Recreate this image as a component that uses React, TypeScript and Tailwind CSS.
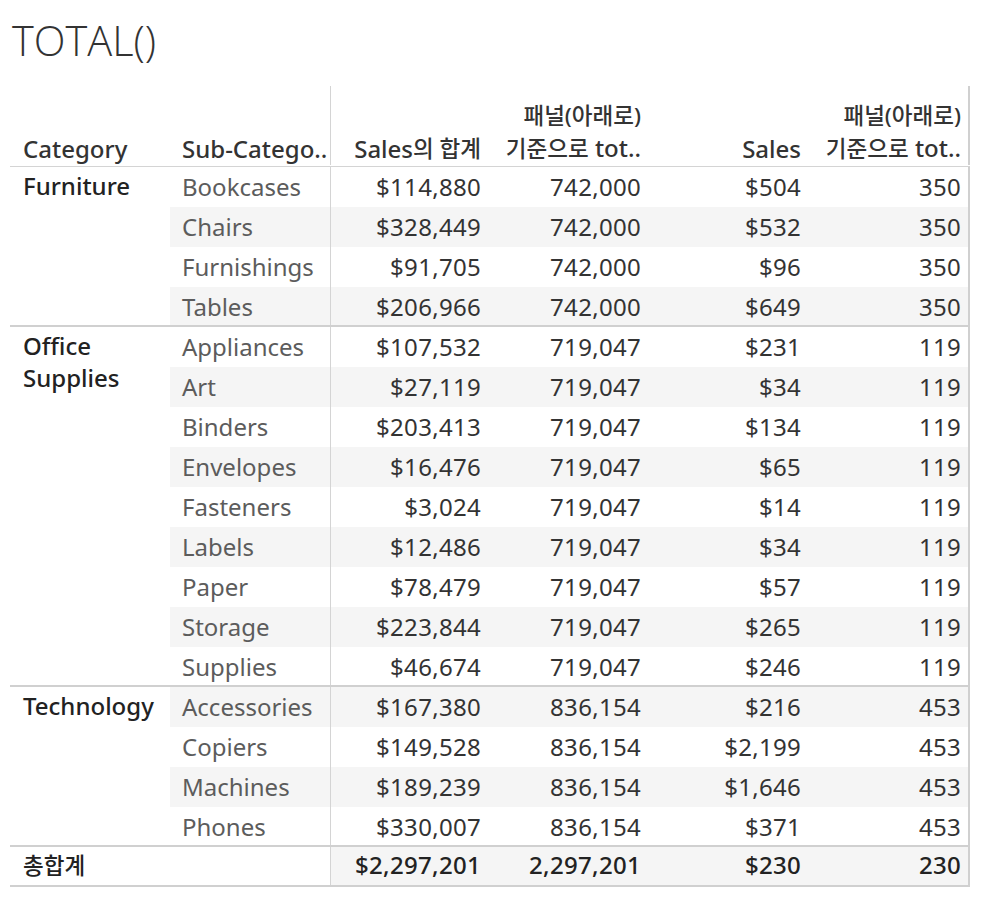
import React from "react";

type Row = { sub: string; sales: string; panel: string; avg: string; panelAvg: string };
type Group = { category: string[]; rows: Row[] };

const groups: Group[] = [
  {
    category: ["Furniture"],
    rows: [
      { sub: "Bookcases", sales: "$114,880", panel: "742,000", avg: "$504", panelAvg: "350" },
      { sub: "Chairs", sales: "$328,449", panel: "742,000", avg: "$532", panelAvg: "350" },
      { sub: "Furnishings", sales: "$91,705", panel: "742,000", avg: "$96", panelAvg: "350" },
      { sub: "Tables", sales: "$206,966", panel: "742,000", avg: "$649", panelAvg: "350" },
    ],
  },
  {
    category: ["Office", "Supplies"],
    rows: [
      { sub: "Appliances", sales: "$107,532", panel: "719,047", avg: "$231", panelAvg: "119" },
      { sub: "Art", sales: "$27,119", panel: "719,047", avg: "$34", panelAvg: "119" },
      { sub: "Binders", sales: "$203,413", panel: "719,047", avg: "$134", panelAvg: "119" },
      { sub: "Envelopes", sales: "$16,476", panel: "719,047", avg: "$65", panelAvg: "119" },
      { sub: "Fasteners", sales: "$3,024", panel: "719,047", avg: "$14", panelAvg: "119" },
      { sub: "Labels", sales: "$12,486", panel: "719,047", avg: "$34", panelAvg: "119" },
      { sub: "Paper", sales: "$78,479", panel: "719,047", avg: "$57", panelAvg: "119" },
      { sub: "Storage", sales: "$223,844", panel: "719,047", avg: "$265", panelAvg: "119" },
      { sub: "Supplies", sales: "$46,674", panel: "719,047", avg: "$246", panelAvg: "119" },
    ],
  },
  {
    category: ["Technology"],
    rows: [
      { sub: "Accessories", sales: "$167,380", panel: "836,154", avg: "$216", panelAvg: "453" },
      { sub: "Copiers", sales: "$149,528", panel: "836,154", avg: "$2,199", panelAvg: "453" },
      { sub: "Machines", sales: "$189,239", panel: "836,154", avg: "$1,646", panelAvg: "453" },
      { sub: "Phones", sales: "$330,007", panel: "836,154", avg: "$371", panelAvg: "453" },
    ],
  },
];

const ko = "text-[22.5px]";
const num = "text-right tracking-[0.3px]";

export default function App() {
  let index = 0;

  return (
    <div className="min-h-screen bg-white pl-[10px] text-[24px] text-[#333] font-['Noto_Sans','Noto_Sans_CJK_KR',sans-serif]">
      <h1 className="mt-[20px] h-[40px] pl-[2px] text-[41.5px] leading-[40px] font-light text-[#333] font-['Open_Sans',sans-serif]">
        TOTAL()
      </h1>

      <div className="mt-[26px] w-[960px]">
        {/* header */}
        <div className="flex h-[81px] border-b border-[#d4d4d4] pb-[1px] leading-[32px] font-medium text-[#333]">
          <div className="flex w-[160px] items-end pl-[13px]">Category</div>
          <div className="flex w-[160px] items-end pl-[12px]">Sub-Catego..</div>
          <div className="flex w-[160px] items-end justify-end border-l border-[#d4d4d4] pr-[9px]">
            Sales<span className={ko}>의 합계</span>
          </div>
          <div className="flex w-[160px] flex-col items-end justify-end pr-[9px]">
            <span className={ko}>패널(아래로)</span>
            <span>
              <span className={ko}>기준으로</span> tot..
            </span>
          </div>
          <div className="flex w-[160px] items-end justify-end pr-[9px]">Sales</div>
          <div className="flex w-[160px] flex-col items-end justify-end border-r-2 border-[#d0d0d0] pr-[7px]">
            <span className={ko}>패널(아래로)</span>
            <span>
              <span className={ko}>기준으로</span> tot..
            </span>
          </div>
        </div>

        {groups.map((g) => (
          <div key={g.category.join(" ")} className="flex border-b-2 border-[#d0d0d0]">
            <div className="w-[160px] pl-[13px] pt-[3px] leading-[32px] font-medium text-[#222]">
              {g.category.map((c) => (
                <div key={c}>{c}</div>
              ))}
            </div>
            <div className="flex-1">
              {g.rows.map((r, i) => {
                const band = index++ % 2 === 1;
                const last = i === g.rows.length - 1;
                return (
                  <div
                    key={r.sub}
                    className={`flex leading-[40px] ${last ? "h-[38px]" : "h-[40px]"} ${band ? "bg-[#f5f5f5]" : "bg-white"}`}
                  >
                    <div className="w-[160px] pl-[12px] text-[#5c5c5c]">{r.sub}</div>
                    <div className={`w-[160px] border-l border-[#d4d4d4] pr-[9px] ${num}`}>{r.sales}</div>
                    <div className={`w-[160px] pr-[9px] ${num}`}>{r.panel}</div>
                    <div className={`w-[160px] pr-[9px] ${num}`}>{r.avg}</div>
                    <div className={`w-[160px] border-r-2 border-[#d0d0d0] pr-[7px] ${num}`}>{r.panelAvg}</div>
                  </div>
                );
              })}
            </div>
          </div>
        ))}

        {/* grand total */}
        <div className="flex h-[40px] border-b-2 border-[#d0d0d0] leading-[36px] font-medium text-[#222]">
          <div className="w-[320px] pl-[13px]">
            <span className={ko}>총합계</span>
          </div>
          <div className="flex flex-1 bg-[#f5f5f5]">
            <div className={`w-[160px] border-l border-[#d4d4d4] pr-[9px] ${num}`}>$2,297,201</div>
            <div className={`w-[160px] pr-[9px] ${num}`}>2,297,201</div>
            <div className={`w-[160px] pr-[9px] ${num}`}>$230</div>
            <div className={`w-[160px] border-r-2 border-[#d0d0d0] pr-[7px] ${num}`}>230</div>
          </div>
        </div>
      </div>
    </div>
  );
}
